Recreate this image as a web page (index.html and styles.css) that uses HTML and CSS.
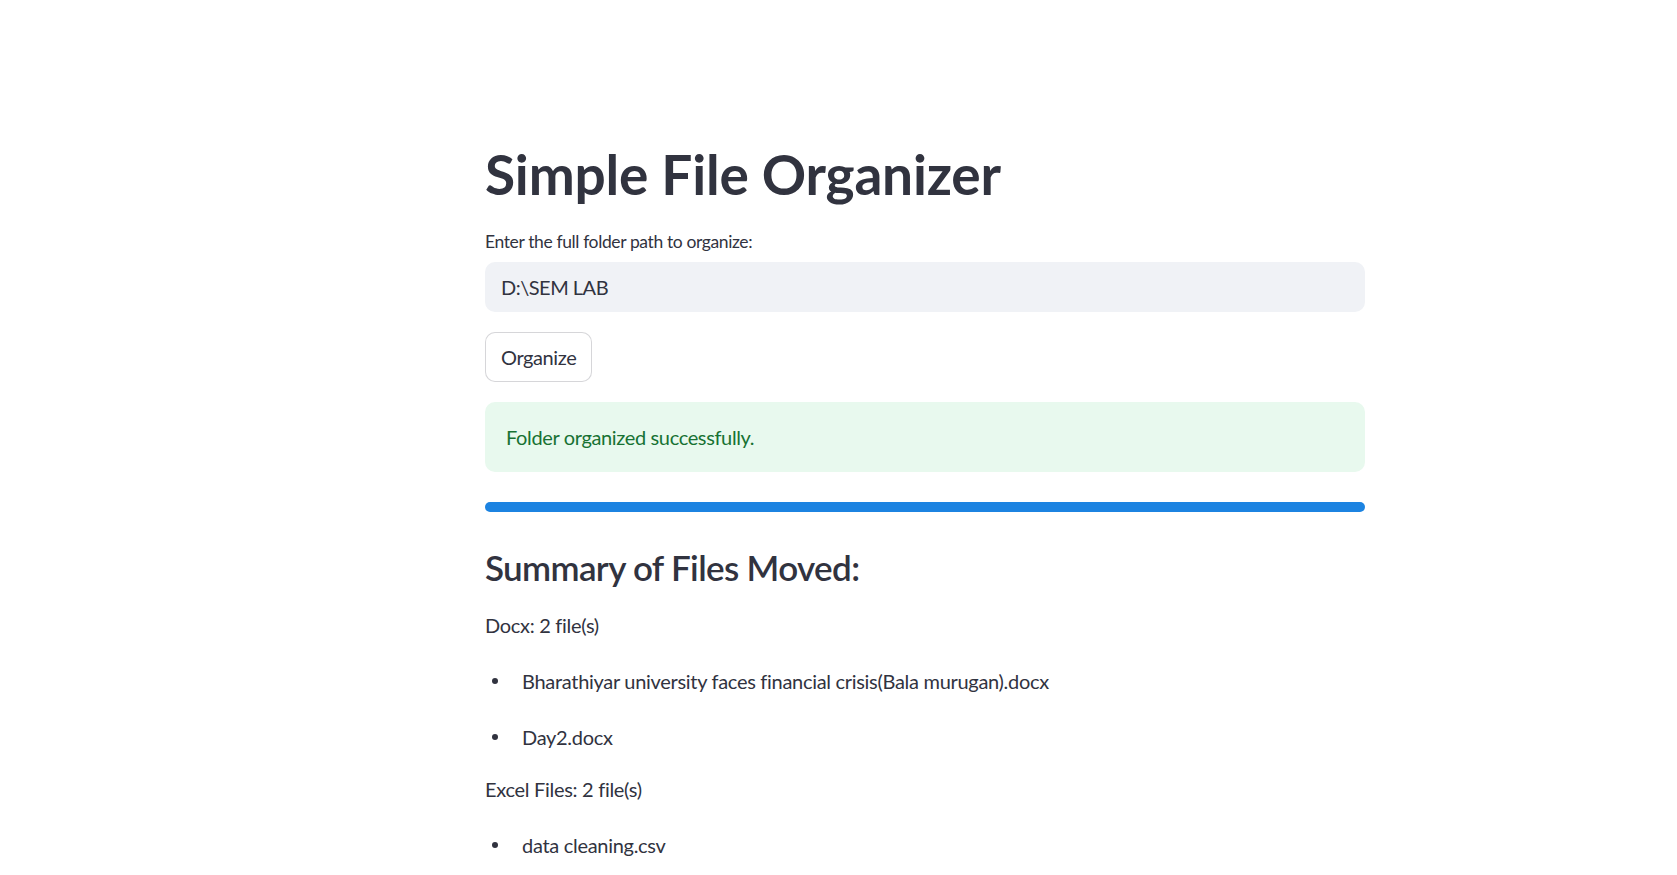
FILE: index.html
```html
<!DOCTYPE html>
<html lang="en">
<head>
<meta charset="utf-8">
<title>Simple File Organizer</title>
<link rel="stylesheet" href="styles.css">
</head>
<body>
<main class="main">
  <h1 class="title">Simple File Organizer</h1>
  <div class="widget">
    <label class="label" for="path">Enter the full folder path to organize:</label>
    <input class="input" id="path" type="text" value="D:\SEM LAB">
  </div>
  <div><button class="button">Organize</button></div>
  <div class="alert">Folder organized successfully.</div>
  <div class="progress"><div class="progress-bar"></div></div>
  <h3 class="subheader">Summary of Files Moved:</h3>
  <p class="text">Docx: 2 file(s)</p>
  <ul class="item"><li>Bharathiyar university faces financial crisis(Bala murugan).docx</li></ul>
  <ul class="item"><li>Day2.docx</li></ul>
  <p class="text">Excel Files: 2 file(s)</p>
  <ul class="item"><li>data cleaning.csv</li></ul>
</main>
</body>
</html>
```
FILE: styles.css
```css
html, body {
  margin: 0;
  padding: 0;
  background: #ffffff;
}
body {
  font-family: "Source Sans Pro", Lato, "Open Sans", sans-serif;
  color: #31333f;
  overflow: hidden;
  height: 875px;
  letter-spacing: -0.3px;
}
.main {
  width: 880px;
  margin-left: 485px;
  padding-top: 141px;
  display: flex;
  flex-direction: column;
  gap: 20px;
}
.title {
  margin: 0;
  font-size: 55px;
  font-weight: 700;
  line-height: 66px;
  height: 66px;
  letter-spacing: -0.2px;
}
.widget {
  display: flex;
  flex-direction: column;
}
.label {
  font-size: 17.5px;
  line-height: 30px;
  height: 30px;
  margin-bottom: 5px;
  letter-spacing: -0.38px;
}
.input {
  box-sizing: border-box;
  height: 50px;
  width: 100%;
  border: none;
  outline: none;
  background: #f0f2f6;
  border-radius: 10px;
  padding: 0 16px;
  font-family: inherit;
  font-size: 20px;
  letter-spacing: -0.5px;
  color: #31333f;
}
.button {
  box-sizing: border-box;
  height: 50px;
  padding: 0 15px;
  background: #ffffff;
  border: 1px solid rgba(49, 51, 63, 0.2);
  border-radius: 10px;
  font-family: inherit;
  font-size: 20px;
  letter-spacing: -0.4px;
  color: #31333f;
}
.alert {
  box-sizing: border-box;
  height: 70px;
  display: flex;
  align-items: center;
  padding: 0 21px;
  background: #e8f9ee;
  border-radius: 10px;
  color: #177233;
  font-size: 20px;
  letter-spacing: -0.36px;
}
.progress {
  margin-top: 10px;
  height: 10px;
}
.progress-bar {
  height: 10px;
  width: 100%;
  background: #1c83e1;
  border-radius: 5px;
}
.subheader {
  margin: 0;
  padding: 14px 0 1px;
  font-size: 35px;
  font-weight: 600;
  line-height: 42px;
  letter-spacing: -0.65px;
}
.text {
  margin: 0;
  font-size: 20px;
  line-height: 32px;
}
.item {
  margin: 0;
  padding: 4px 0 0;
  list-style: none;
}
.item li {
  display: flex;
  align-items: center;
  font-size: 20px;
  line-height: 32px;
}
.item li::before {
  content: "";
  flex: none;
  width: 6px;
  height: 6px;
  border-radius: 50%;
  background: #31333f;
  margin-left: 7px;
  margin-right: 24px;
}
```
